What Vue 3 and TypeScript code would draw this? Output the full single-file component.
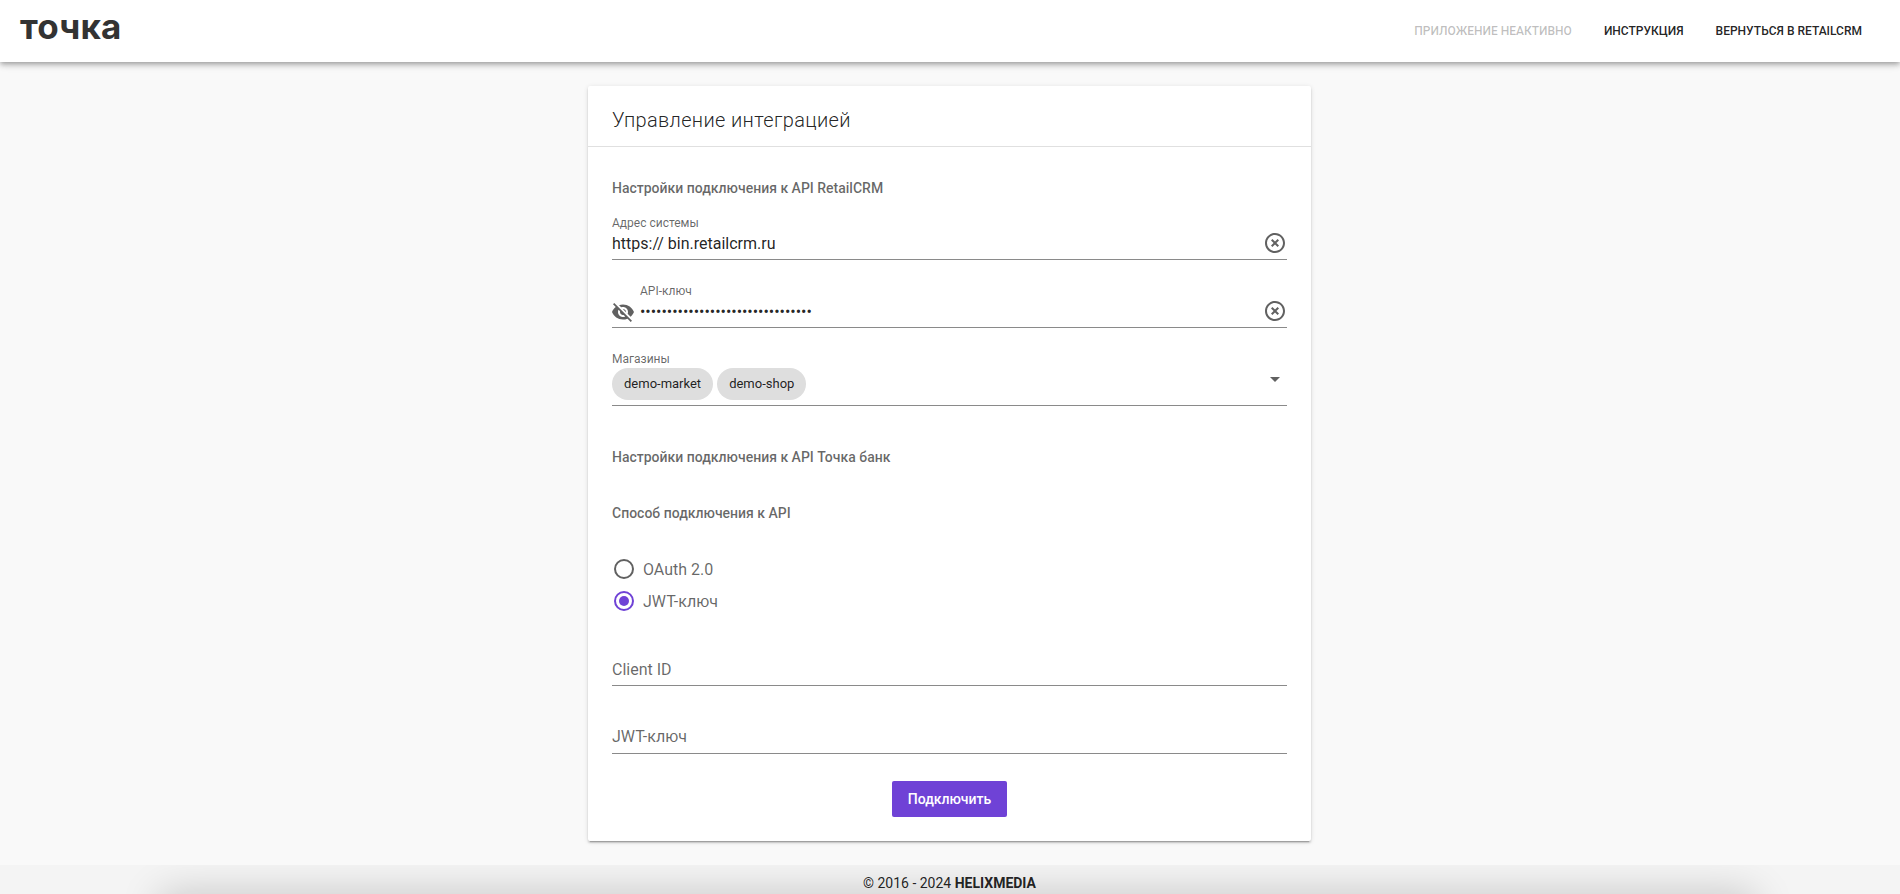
<script setup lang="ts">
const navItems = [
  { label: 'Приложение неактивно', off: true },
  { label: 'Инструкция', off: false },
  { label: 'Вернуться в RetailCRM', off: false },
]
const dots = '•'.repeat(32)
const clearPath =
  'M14.59 8L12 10.59 9.41 8 8 9.41 10.59 12 8 14.59 9.41 16 12 13.41 14.59 16 16 14.59 13.41 12 16 9.41 14.59 8zM12 2C6.47 2 2 6.47 2 12s4.47 10 10 10 10-4.47 10-10S17.53 2 12 2zm0 18c-4.41 0-8-3.59-8-8s3.59-8 8-8 8 3.59 8 8-3.59 8-8 8z'
</script>

<template>
  <div class="page">
    <header class="bar">
      <div class="logo">точка</div>
      <nav class="nav">
        <a v-for="n in navItems" :key="n.label" class="nav-item" :class="{ off: n.off }">{{ n.label }}</a>
      </nav>
    </header>

    <main class="main">
      <section class="card">
        <h1 class="card-title">Управление интеграцией</h1>
        <div class="card-body">
          <h2 class="sub first">Настройки подключения к API RetailCRM</h2>

          <div class="field text-field first-field">
            <div class="field-main">
              <label class="small">Адрес системы</label>
              <div class="value">https:// bin.retailcrm.ru</div>
            </div>
            <svg class="clear" viewBox="0 0 24 24"><path fill="#616161" :d="clearPath" /></svg>
          </div>

          <div class="field text-field gap-field">
            <svg class="eye" viewBox="0 0 24 24"><path fill="#616161" d="M12 7c2.76 0 5 2.24 5 5 0 .65-.13 1.26-.36 1.83l2.92 2.92c1.51-1.26 2.7-2.89 3.43-4.75-1.73-4.39-6-7.5-11-7.5-1.4 0-2.74.25-3.98.7l2.16 2.16C10.74 7.13 11.35 7 12 7zM2 4.27l2.28 2.28.46.46C3.08 8.3 1.78 10.02 1 12c1.73 4.39 6 7.5 11 7.5 1.55 0 3.03-.3 4.38-.84l.42.42L19.73 22 21 20.73 3.27 3 2 4.27zM7.53 9.8l1.55 1.55c-.05.21-.08.43-.08.65 0 1.66 1.34 3 3 3 .22 0 .44-.03.65-.08l1.55 1.55c-.67.33-1.41.53-2.2.53-2.76 0-5-2.24-5-5 0-.79.2-1.53.53-2.2zm4.31-.78l3.15 3.15.02-.16c0-1.66-1.34-3-3-3l-.17.01z"/></svg>
            <div class="field-main">
              <label class="small">API-ключ</label>
              <div class="value dots">{{ dots }}</div>
            </div>
            <svg class="clear" viewBox="0 0 24 24"><path fill="#616161" :d="clearPath" /></svg>
          </div>

          <div class="field select-field">
            <div class="field-main">
              <label class="small">Магазины</label>
              <div class="chips">
                <span class="chip">demo-market</span>
                <span class="chip">demo-shop</span>
              </div>
            </div>
            <span class="caret"></span>
          </div>

          <h2 class="sub second">Настройки подключения к API Точка банк</h2>
          <h2 class="sub third">Способ подключения к API</h2>

          <div class="radios">
            <div class="radio">
              <span class="ring"></span>
              <span class="radio-label">OAuth 2.0</span>
            </div>
            <div class="radio">
              <span class="ring on"></span>
              <span class="radio-label">JWT-ключ</span>
            </div>
          </div>

          <div class="field blank first-blank"><span class="placeholder">Client ID</span></div>
          <div class="field blank gap-blank"><span class="placeholder">JWT-ключ</span></div>

          <div class="actions">
            <button class="btn" type="button">Подключить</button>
          </div>
        </div>
      </section>
    </main>

    <footer class="foot">
      <span class="foot-text">© 2016 - 2024 <b>HELIXMEDIA</b></span>
    </footer>
  </div>
</template>

<style>
html, body { margin: 0; height: 100%; overflow: hidden; background: #f9f9f9; }
</style>

<style scoped>
.page {
  height: 894px;
  overflow: hidden;
  display: flex;
  flex-direction: column;
  background: #f9f9f9;
  font-family: Roboto, "Noto Sans", sans-serif;
  color: rgba(0, 0, 0, .87);
}
.bar {
  height: 62px;
  flex: none;
  display: flex;
  align-items: center;
  justify-content: space-between;
  padding: 0 38px 0 20px;
  background: #fff;
  box-shadow: 0 2px 4px -1px rgba(0,0,0,.2), 0 4px 5px 0 rgba(0,0,0,.14), 0 1px 10px 0 rgba(0,0,0,.12);
  position: relative;
  z-index: 2;
}
.logo {
  font-family: Inter, sans-serif;
  font-weight: 700;
  font-size: 35px;
  line-height: 40px;
  letter-spacing: .2px;
  color: #333;
  margin-top: -10px;
}
.nav { display: flex; gap: 32px; }
.nav-item {
  font-size: 12px;
  font-weight: 500;
  text-transform: uppercase;
}
.nav-item.off { color: rgba(0,0,0,.26); }
.main { flex: 1; min-height: 0; display: flex; justify-content: center; padding-top: 24px; }
.card {
  width: 723px;
  height: 755px;
  margin-right: 1px;
  background: #fff;
  border-radius: 2px;
  box-shadow: 0 3px 1px -2px rgba(0,0,0,.2), 0 2px 2px 0 rgba(0,0,0,.14), 0 1px 5px 0 rgba(0,0,0,.12);
}
.card-title {
  margin: 0;
  height: 60px;
  padding: 0 24px;
  font-size: 20px;
  font-weight: 300;
  line-height: 68px;
  letter-spacing: .35px;
  border-bottom: 1px solid #e0e0e0;
}
.card-body { padding: 0 24px; }
.sub {
  margin: 0;
  font-size: 14px;
  font-weight: 500;
  line-height: 20px;
  color: rgba(0,0,0,.6);
}
.sub.first { padding-top: 31px; }
.sub.second { margin-top: 41px; }
.sub.third { margin-top: 36px; }
.field {
  display: flex;
  align-items: flex-end;
  border-bottom: 1px solid #8a8a8a;
  box-sizing: border-box;
}
.field-main { flex: 1; min-width: 0; }
.small {
  display: block;
  font-size: 12px;
  line-height: 16px;
  color: rgba(0,0,0,.6);
}
.value {
  box-sizing: border-box;
  padding-top: 1px;
  font-size: 16px;
  line-height: 24px;
  height: 28px;
}
.text-field { height: 47px; }
.first-field { margin-top: 15px; }
.gap-field { margin-top: 21px; }
.dots { overflow: hidden; white-space: nowrap; letter-spacing: -.03px; }
.clear { width: 24px; height: 24px; flex: none; margin-bottom: 4px; }
.eye { width: 24px; height: 24px; flex: none; margin: 0 5px 3px -1px; }
.select-field { margin-top: 21px; height: 57px; }
.chips { display: flex; gap: 4px; margin-top: 1px; padding-bottom: 5px; }
.chip {
  height: 32px;
  line-height: 32px;
  padding: 0 12px;
  border-radius: 16px;
  background: #dedede;
  font-size: 13px;
  white-space: nowrap;
}
.caret {
  width: 0;
  height: 0;
  border-left: 5px solid transparent;
  border-right: 5px solid transparent;
  border-top: 5px solid #616161;
  margin: 0 7px 23px 0;
}
.radios { margin-top: 34px; display: flex; flex-direction: column; gap: 8px; }
.radio { display: flex; align-items: center; height: 24px; gap: 8px; }
.ring {
  width: 20px;
  height: 20px;
  margin: 0 1px 0 2px;
  box-sizing: border-box;
  border: 2px solid #616161;
  border-radius: 50%;
  position: relative;
}
.ring.on { border-color: #6f42d6; }
.ring.on::after {
  content: "";
  position: absolute;
  inset: 3px;
  border-radius: 50%;
  background: #6f42d6;
}
.radio-label { font-size: 16px; color: rgba(0,0,0,.6); }
.blank { height: 29px; align-items: flex-start; }
.first-blank { margin-top: 44px; padding-top: 1px; }
.gap-blank { margin-top: 39px; }
.placeholder { font-size: 16px; color: rgba(0,0,0,.6); line-height: 24px; }
.actions { display: flex; justify-content: center; margin-top: 27px; }
.btn {
  width: 115px;
  height: 36px;
  border: 0;
  border-radius: 2px;
  background: #6f42d6;
  color: #fff;
  font: 500 14px Roboto, sans-serif;
}
.foot {
  height: 29px;
  flex: none;
  position: relative;
  overflow: hidden;
  background: #f4f4f4;
  text-align: center;
  font-size: 14px;
  line-height: 37px;
  padding-right: 1px;
}
.foot-text { position: relative; z-index: 1; }
.foot b { font-weight: 700; }
.foot::after {
  content: "";
  position: absolute;
  left: 160px;
  right: 145px;
  top: 29px;
  height: 40px;
  box-shadow: 0 0 40px 0 rgba(0,0,0,.2);
}
</style>
